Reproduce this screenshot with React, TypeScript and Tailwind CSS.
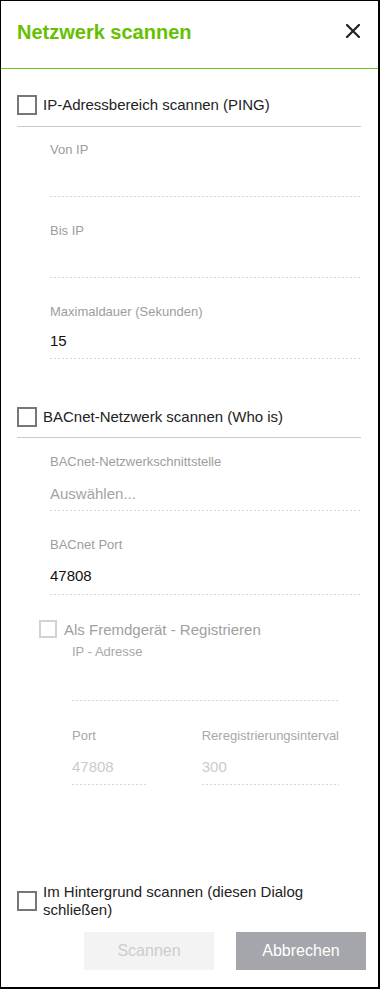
import React from 'react';

const Dots = ({ className = '' }: { className?: string }) => (
  <div
    className={`h-px bg-[linear-gradient(to_right,#d6d6d6_50%,transparent_50%)] bg-[length:4px_1px] bg-repeat-x ${className}`}
  />
);

const Box = ({ disabled = false }: { disabled?: boolean }) =>
  disabled ? (
    <div className="w-[18px] h-[18px] shrink-0 border-2 border-[#d2d2d2] bg-white" />
  ) : (
    <div className="w-5 h-5 shrink-0 border-2 border-[#777] bg-white" />
  );

const Field = ({
  label,
  value,
  muted = false,
  className = '',
  valueGap = 'mt-[10px]',
  dotsGap = 'mt-[6px]',
}: {
  label: string;
  value?: string;
  muted?: boolean;
  className?: string;
  valueGap?: string;
  dotsGap?: string;
}) => (
  <div className={className}>
    <div className="h-4 text-[13px] leading-[16px] text-[#9d9d9d] whitespace-nowrap">{label}</div>
    <div className={`${valueGap} h-[22px] text-[15px] leading-[22px] ${muted ? 'text-[#a3a3a3]' : 'text-[#111]'}`}>
      {value}
    </div>
    <Dots className={dotsGap} />
  </div>
);

const App = () => {
  return (
    <div className="w-[380px] h-[989px] border-t border-l border-r-2 border-b-2 border-black bg-white flex flex-col font-['Liberation_Sans',Arial,sans-serif] text-[#222]">
      <header className="h-[67px] flex items-start justify-between pl-[16px] pr-[18px] pt-[19px]">
        <h1 className="text-[20px] leading-[24px] font-bold text-[#66c000]">Netzwerk scannen</h1>
        <svg className="mt-[4px]" width="14" height="14" viewBox="0 0 14 14">
          <path d="M1 1L13 13M13 1L1 13" stroke="#222" strokeWidth="2.2" strokeLinecap="square" />
        </svg>
      </header>
      <div className="h-px bg-[#6cc21a]" />

      <div className="flex-1 flex flex-col pl-[16px] pr-[17px]">
        {/* PING */}
        <label className="mt-[26px] flex items-start gap-[6px] text-[15px] leading-[20px]">
          <Box />
          <span>IP-Adressbereich scannen (PING)</span>
        </label>
        <div className="mt-[11px] h-px bg-[#cdcbc5]" />
        <div className="pl-[33px]">
          <Field className="mt-[15px]" label="Von IP" />
          <Field className="mt-[26px]" label="Bis IP" />
          <Field className="mt-[26px]" label="Maximaldauer (Sekunden)" value="15" />
        </div>

        {/* BACnet */}
        <label className="mt-[48px] flex items-start gap-[6px] text-[15px] leading-[20px]">
          <Box />
          <span>BACnet-Netzwerk scannen (Who is)</span>
        </label>
        <div className="mt-[10px] h-px bg-[#cdcbc5]" />
        <div className="pl-[33px]">
          <Field
            className="mt-[16px]"
            label="BACnet-Netzwerkschnittstelle"
            value="Auswählen..."
            muted
            valueGap="mt-[13px]"
            dotsGap="mt-[5px]"
          />
          <Field className="mt-[26px]" label="BACnet Port" value="47808" valueGap="mt-[12px]" dotsGap="mt-[7px]" />
        </div>

        <div className="mt-[25px] pl-[22px] flex items-start gap-[7px] text-[15px] leading-[20px] text-[#a0a0a0]">
          <Box disabled />
          <span>Als Fremdgerät - Registrieren</span>
        </div>
        <div className="pl-[55px] mr-[22px]">
          <div className="mt-[4px]">
            <div className="h-4 text-[13px] leading-[16px] text-[#a8a8a8]">IP - Adresse</div>
            <Dots className="mt-[40px]" />
          </div>
          <div className="mt-[27px] flex">
            <div className="w-[75px]">
              <div className="h-4 text-[13px] leading-[16px] text-[#a8a8a8]">Port</div>
              <div className="mt-[12px] h-[22px] text-[15px] leading-[22px] text-[#cbcbcb]">47808</div>
              <Dots className="mt-[6px]" />
            </div>
            <div className="ml-[56px] flex-1">
              <div className="h-4 text-[13px] leading-[16px] text-[#a8a8a8] whitespace-nowrap">Reregistrierungsinterval</div>
              <div className="mt-[12px] h-[22px] text-[15px] leading-[22px] text-[#cbcbcb]">300</div>
              <Dots className="mt-[6px]" />
            </div>
          </div>
        </div>

        <div className="flex-1" />

        <label className="flex items-center gap-[6px] text-[15px] leading-[18px]">
          <Box />
          <span>Im Hintergrund scannen (diesen Dialog schließen)</span>
        </label>

        <div className="mt-[13px] mb-[17px] -mr-[5px] flex justify-end gap-[22px]">
          <button className="w-[130px] h-[38px] bg-[#f3f3f3] text-[16px] text-[#cdcdcd]">Scannen</button>
          <button className="w-[130px] h-[38px] bg-[#a4a6ab] text-[16px] text-white">Abbrechen</button>
        </div>
      </div>
    </div>
  );
};

export default App;
